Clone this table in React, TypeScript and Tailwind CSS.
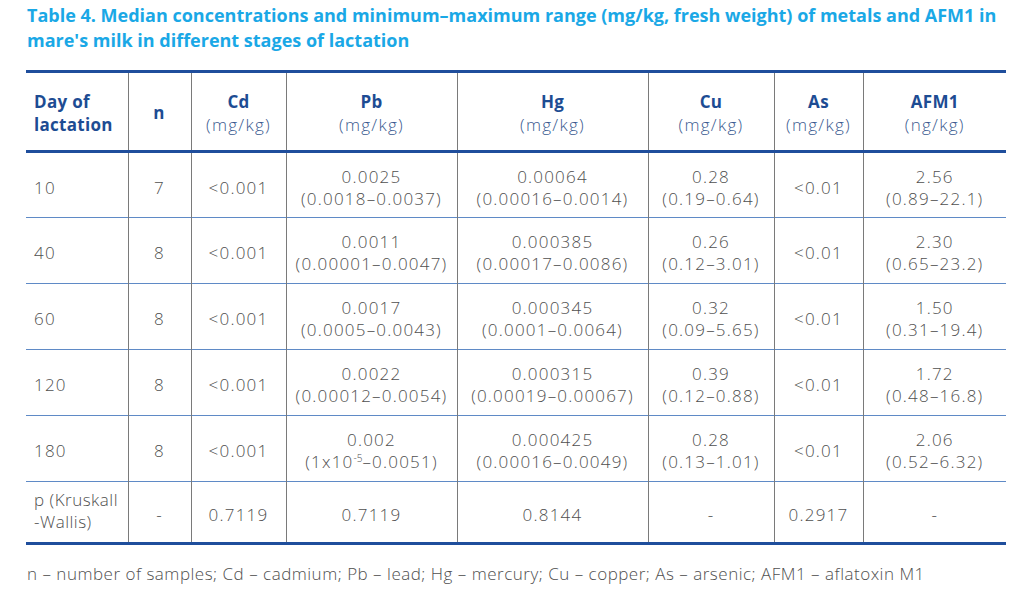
import React from "react";

const rows: { day: string; n: string; cd: string; pb: React.ReactNode[]; hg: string[]; cu: string[]; as: string; afm: string[] }[] = [
  { day: "10", n: "7", cd: "<0.001", pb: ["0.0025", "(0.0018–0.0037)"], hg: ["0.00064", "(0.00016–0.0014)"], cu: ["0.28", "(0.19–0.64)"], as: "<0.01", afm: ["2.56", "(0.89–22.1)"] },
  { day: "40", n: "8", cd: "<0.001", pb: ["0.0011", "(0.00001–0.0047)"], hg: ["0.000385", "(0.00017–0.0086)"], cu: ["0.26", "(0.12–3.01)"], as: "<0.01", afm: ["2.30", "(0.65–23.2)"] },
  { day: "60", n: "8", cd: "<0.001", pb: ["0.0017", "(0.0005–0.0043)"], hg: ["0.000345", "(0.0001–0.0064)"], cu: ["0.32", "(0.09–5.65)"], as: "<0.01", afm: ["1.50", "(0.31–19.4)"] },
  { day: "120", n: "8", cd: "<0.001", pb: ["0.0022", "(0.00012–0.0054)"], hg: ["0.000315", "(0.00019–0.00067)"], cu: ["0.39", "(0.12–0.88)"], as: "<0.01", afm: ["1.72", "(0.48–16.8)"] },
  {
    day: "180",
    n: "8",
    cd: "<0.001",
    pb: [
      "0.002",
      <span key="x">
        (1x10<sup className="text-[10px] relative -top-[6px] tracking-[0px]">-5</sup>–0.0051)
      </span>,
    ],
    hg: ["0.000425", "(0.00016–0.0049)"],
    cu: ["0.28", "(0.13–1.01)"],
    as: "<0.01",
    afm: ["2.06", "(0.52–6.32)"],
  },
];

const Two = ({ v }: { v: React.ReactNode[] }) => (
  <div className="flex flex-col items-center leading-[22px]">
    <span>{v[0]}</span>
    <span>{v[1]}</span>
  </div>
);

const H = ({ t, u }: { t: string; u: string }) => (
  <div className="flex flex-col items-center leading-[23px]">
    <span className="font-bold text-[#1d4c93] tracking-[0.3px]">{t}</span>
    <span className="text-[#3a5a90] font-light tracking-[1.3px]">{u}</span>
  </div>
);

export default function App() {
  const vl = "border-l border-[#7a7a7a]";
  const c = "pt-[5px]";
  return (
    <div className="w-[1024px] h-[596px] bg-white overflow-hidden font-['Open_Sans',sans-serif] text-[#4f4f4f]">
      <div className="pl-[27px] pt-[3px] text-[18px] font-bold leading-[25px] text-[#1aa8e6] whitespace-nowrap">
        Table 4. Median concentrations and minimum–maximum range (mg/kg, fresh weight) of metals and AFM1 in
        <br />
        mare's milk in different stages of lactation
      </div>
      <table className="ml-[26px] mt-[17px] w-[980px] table-fixed border-collapse text-[17px] font-light tracking-[1.2px]">
        <colgroup>
          <col className="w-[102px]" />
          <col className="w-[63px]" />
          <col className="w-[95px]" />
          <col className="w-[171px]" />
          <col className="w-[191px]" />
          <col className="w-[126px]" />
          <col className="w-[89px]" />
          <col className="w-[143px]" />
        </colgroup>
        <thead>
          <tr className="border-t-[3px] border-b-[3px] border-[#1f4e9c] h-[80px]">
            <th className="text-left pl-[8px] pt-[3px] font-bold text-[#1d4c93] leading-[23px] tracking-[0.3px]">
              Day of
              <br />
              lactation
            </th>
            <th className={`${vl} pt-[3px] font-bold text-[#1d4c93]`}>n</th>
            <th className={`${vl} pt-[3px]`}><H t="Cd" u="(mg/kg)" /></th>
            <th className={`${vl} pt-[3px]`}><H t="Pb" u="(mg/kg)" /></th>
            <th className={`${vl} pt-[3px]`}><H t="Hg" u="(mg/kg)" /></th>
            <th className={`${vl} pt-[3px]`}><H t="Cu" u="(mg/kg)" /></th>
            <th className={`${vl} pt-[3px]`}><H t="As" u="(mg/kg)" /></th>
            <th className={`${vl} pt-[3px]`}><H t="AFM1" u="(ng/kg)" /></th>
          </tr>
        </thead>
        <tbody>
          {rows.map((r) => (
            <tr key={r.day} className="border-b border-[#5f8ac6] h-[66px]">
              <td className={`pl-[8px] ${c}`}>{r.day}</td>
              <td className={`${vl} ${c} text-center`}>{r.n}</td>
              <td className={`${vl} ${c} text-center`}>{r.cd}</td>
              <td className={`${vl} ${c}`}><Two v={r.pb} /></td>
              <td className={`${vl} ${c}`}><Two v={r.hg} /></td>
              <td className={`${vl} ${c}`}><Two v={r.cu} /></td>
              <td className={`${vl} ${c} text-center`}>{r.as}</td>
              <td className={`${vl} ${c}`}><Two v={r.afm} /></td>
            </tr>
          ))}
          <tr className="border-b-[3px] border-[#1f4e9c] h-[62px]">
            <td className="pl-[8px] pb-[2px] leading-[22px] tracking-[0.5px]">
              p (Kruskall
              <br />
              -Wallis)
            </td>
            <td className={`${vl} ${c} text-center`}>-</td>
            <td className={`${vl} ${c} text-center`}>0.7119</td>
            <td className={`${vl} ${c} text-center`}>0.7119</td>
            <td className={`${vl} ${c} text-center`}>0.8144</td>
            <td className={`${vl} ${c} text-center`}>-</td>
            <td className={`${vl} ${c} text-center`}>0.2917</td>
            <td className={`${vl} ${c} text-center`}>-</td>
          </tr>
        </tbody>
      </table>
      <div className="pl-[27px] mt-[18px] text-[17px] font-light leading-[22px] tracking-[0.5px] whitespace-nowrap">
        n – number of samples; Cd – cadmium; Pb – lead; Hg – mercury; Cu – copper; As – arsenic; AFM1 – aflatoxin M1
      </div>
    </div>
  );
}
